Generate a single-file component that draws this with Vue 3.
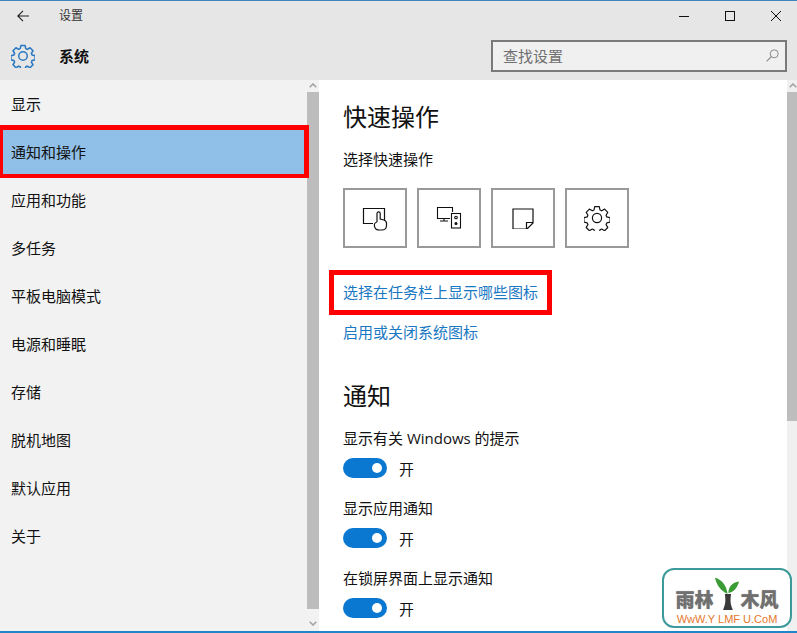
<script setup>
const navItems = ['显示', '通知和操作', '应用和功能', '多任务', '平板电脑模式', '电源和睡眠', '存储', '脱机地图', '默认应用', '关于']
const toggles = ['显示有关 Windows 的提示', '显示应用通知', '在锁屏界面上显示通知']
const gearPath = 'M10.700 1.700h4.600l.7 3.300 1.700.8 2.900-1.700 3.200 3.200-1.700 2.900.7 1.700 3.300.7v4.600l-3.300.7-.7 1.700 1.700 2.900-3.200 3.200-2.900-1.700-1.700.7-.7 3.300h-4.600l-.7-3.300-1.700-.7-2.900 1.700-3.200-3.200 1.700-2.900-.7-1.700-3.300-.7v-4.600l3.300-.7.7-1.700-1.700-2.900 3.200-3.200 2.900 1.700 1.700-.8z'
</script>

<template>
  <div class="win">
    <header class="head">
      <div class="titlebar">
        <svg class="back" width="12" height="12" viewBox="0 0 12 12"><path d="M12 6H1M6 .8 .8 6 6 11.200" fill="none" stroke="#222" stroke-width="1.100"/></svg>
        <span class="title">设置</span>
        <div class="caps">
          <svg width="10" height="10" viewBox="0 0 10 10"><path d="M0 5.500h10" stroke="#111" stroke-width="1"/></svg>
          <svg width="10" height="10" viewBox="0 0 10 10"><rect x=".5" y=".5" width="9" height="9" fill="none" stroke="#111"/></svg>
          <svg width="10" height="10" viewBox="0 0 10 10"><path d="M0 0l10 10M10 0 0 10" stroke="#111" stroke-width="1"/></svg>
        </div>
      </div>
      <div class="syshead">
        <svg class="gear" width="24" height="24" viewBox="0 0 26 26"><path :d="gearPath" fill="none" stroke="#2b79c2" stroke-width="1.700" stroke-linejoin="round"/><circle cx="13" cy="13" r="4.600" fill="none" stroke="#2b79c2" stroke-width="1.600"/></svg>
        <span class="systitle">系统</span>
        <div class="search">
          <span>查找设置</span>
          <svg width="13" height="13" viewBox="0 0 13 13"><circle cx="8.200" cy="4.800" r="4" fill="none" stroke="#8a8a8a"/><path d="M5.300 7.700 .6 12.400" stroke="#8a8a8a" stroke-width="1.200"/></svg>
        </div>
      </div>
    </header>

    <div class="body">
      <aside class="side">
        <nav class="nav">
          <div v-for="(item, i) in navItems" :key="item" class="nav-item" :class="{ active: i === 1 }">{{ item }}</div>
        </nav>
        <div class="bar bar-left">
          <svg class="chev up" width="8" height="5" viewBox="0 0 8 5"><path d="M.7 4.300 4 1l3.300 3.300" fill="none" stroke="#a0a0a0" stroke-width="1.500"/></svg>
          <div class="thumb"></div>
          <svg class="chev down" width="8" height="5" viewBox="0 0 8 5"><path d="M.7.7 4 4 7.300.7" fill="none" stroke="#a0a0a0" stroke-width="1.500"/></svg>
        </div>
      </aside>

      <main class="main">
        <h2 class="h">快速操作</h2>
        <p class="sub">选择快速操作</p>
        <div class="tiles">
          <div class="tile">
            <svg width="26" height="26" viewBox="0 0 26 26" fill="none" stroke="#111" stroke-width="1.200"><path d="M11 18.500H1.500v-15h21V15"/><path d="M15 17V8.500a1.600 1.600 0 0 1 3.200 0V14l3.600 1c1.700.5 2.700 1.500 2.700 3.200v2.300c0 2.700-2 4.500-4.500 4.500h-2.500c-2.600 0-4.500-1.500-5-3.700-.5-2 .5-3.800 2.500-4.300"/></svg>
          </div>
          <div class="tile">
            <svg width="26" height="26" viewBox="0 0 26 26" fill="none" stroke="#111" stroke-width="1.100"><path d="M14 13.500H1.500v-11h15V7M8 13.500V16M4 16h8"/><rect x="15.500" y="8.500" width="9" height="14.500"/><circle cx="20" cy="12.500" r="1.300"/><circle cx="20" cy="18.500" r="1" fill="#111"/></svg>
          </div>
          <div class="tile">
            <svg width="22" height="22" viewBox="0 -1 22 22" fill="none" stroke="#111" stroke-width="1.200"><path d="M1 1h20v14l-6 6H1z"/><path d="M21 14.500h-6.500V21"/></svg>
          </div>
          <div class="tile">
            <svg width="26" height="26" viewBox="0 0 26 26"><path :d="gearPath" fill="none" stroke="#111" stroke-width="1.200" stroke-linejoin="round"/><circle cx="13" cy="13" r="4.600" fill="none" stroke="#111" stroke-width="1.200"/></svg>
          </div>
        </div>
        <div class="links">
          <a class="link boxed">选择在任务栏上显示哪些图标</a>
          <a class="link">启用或关闭系统图标</a>
        </div>
        <h2 class="h h2">通知</h2>
        <div v-for="t in toggles" :key="t" class="setting">
          <div class="lbl">{{ t }}</div>
          <div class="state"><span class="toggle"><b></b></span><span>开</span></div>
        </div>
      </main>
      <div class="bar bar-right">
        <svg class="chev up" width="8" height="5" viewBox="0 0 8 5"><path d="M.7 4.300 4 1l3.300 3.300" fill="none" stroke="#a0a0a0" stroke-width="1.500"/></svg>
        <div class="thumb"></div>
      </div>
    </div>

    <div class="mark">
      <div class="mark-top"><span>雨林</span>
        <svg class="tree" width="25" height="38" viewBox="0 0 28 40"><path d="M9 39c3-7 3-11 2-18h7c-1 7-1 11 2 18z" fill="#3a3a3a"/><path d="M14 21C13 12 8 5 0 3c2 9 7 15 14 18z" fill="#3b9c36"/><path d="M15 20c0-7 4-12 12-13-2 7-6 12-12 13z" fill="#3b9c36"/></svg>
        <span>木风</span></div>
      <div class="mark-url">WwW.Y LMF U.CoM</div>
    </div>
  </div>
</template>

<style scoped>
.win {
  width: 797px; height: 633px; box-sizing: border-box; position: relative; overflow: hidden;
  border-top: 1px solid #3f84bd; border-bottom: 2px solid #1f86c8;
  background: #fff; color: #111;
  font-family: "Noto Sans CJK SC", "Noto Sans", sans-serif; font-size: 15px;
}
.head { height: 79px; background: #e6e6e6; }
.titlebar { height: 30px; display: flex; align-items: center; padding-left: 17px; }
.title { margin-left: 30px; margin-top: -4px; font-size: 12px; color: #333; }
.caps { margin-left: auto; display: flex; gap: 36px; padding-right: 16px; align-items: center; }
.syshead { height: 49px; display: flex; align-items: center; padding-left: 11px; }
.systitle { margin-left: 24px; font-weight: 700; font-size: 15px; }
.search {
  margin-left: auto; margin-right: 10px; width: 296px; height: 32px; box-sizing: border-box;
  border: 2px solid #7a7a7a; background: #f0f0f0; color: #6f6f6f;
  display: flex; align-items: center; justify-content: space-between; padding: 0 6px 0 10px;
}
.body { display: flex; height: 551px; }
.side { width: 319px; background: #f2f2f2; display: flex; flex: none; }
.nav { flex: 1; min-width: 0; }
.nav-item { height: 48px; display: flex; align-items: center; padding: 0 0 2px 11px; box-sizing: border-box; }
.nav-item.active { background: #90bfe7; position: relative; width: 307px; }
.nav-item.active::after {
  content: ""; position: absolute; z-index: 1; left: 0; width: 309px; top: -3px; bottom: -2px; box-sizing: border-box;
  border: solid #f00; border-width: 5px 5px 4px 3px;
}
.bar { width: 12px; position: relative; flex: none; display: flex; flex-direction: column; }
.bar-right { width: 10px; background: #f0f0f0; }
.thumb { background: #bdbdbd; margin-top: 12px; }
.bar-left .thumb { height: 517px; }
.bar-right .thumb { height: 329px; }
.chev { position: absolute; left: 2px; }
.chev.up { top: 3px; }
.chev.down { bottom: 5px; }
.main { flex: 1; min-width: 0; padding: 19px 0 0 24px; }
.h { margin: 0; font-size: 24px; font-weight: 400; line-height: 34px; }
.sub { margin: 16px 0 0; line-height: 20px; }
.tiles { display: flex; gap: 10px; margin-top: 19px; }
.tile { width: 64px; height: 60px; box-sizing: border-box; border: 2px solid #999; display: flex; align-items: center; justify-content: center; }
.links { display: flex; flex-direction: column; align-items: flex-start; gap: 20px; margin-top: 34px; }
.link { color: #1a78c2; line-height: 20px; }
.boxed { position: relative; }
.boxed::after { content: ""; position: absolute; left: -14px; right: -14px; top: -12px; bottom: -13px; border: 5px solid #f00; pointer-events: none; }
.h2 { margin-top: 36px; }
.setting { margin-top: 20px; }
.h2 + .setting { margin-top: 16px; }
.lbl { line-height: 20px; font-family: "Open Sans", "Noto Sans CJK SC", sans-serif; }
.state { display: flex; align-items: center; gap: 12px; margin-top: 10px; height: 20px; }
.toggle { width: 44px; height: 20px; border-radius: 10px; background: #0a78d1; position: relative; display: block; }
.toggle b { position: absolute; width: 10px; height: 10px; top: 5px; right: 5px; border-radius: 50%; background: #fff; }
.mark {
  position: absolute; left: 662px; top: 567px; width: 130px; height: 60px; box-sizing: border-box;
  border: 2px solid #3d9a9a; border-radius: 12px; background: #fff; overflow: hidden;
  display: flex; flex-direction: column; align-items: center;
}
.mark-top { display: flex; align-items: flex-end; height: 42px; color: #707070; font-weight: 900; font-size: 19px; line-height: 26px; text-shadow: 0 0 1px #999; white-space: nowrap; }
.tree { margin: 0 1px; flex: none; }
.mark-url { color: #e5762a; font-size: 11px; font-family: "Liberation Sans", sans-serif; line-height: 14px; white-space: nowrap; }
</style>

<style>
html, body { margin: 0; background: #fff; }
</style>
